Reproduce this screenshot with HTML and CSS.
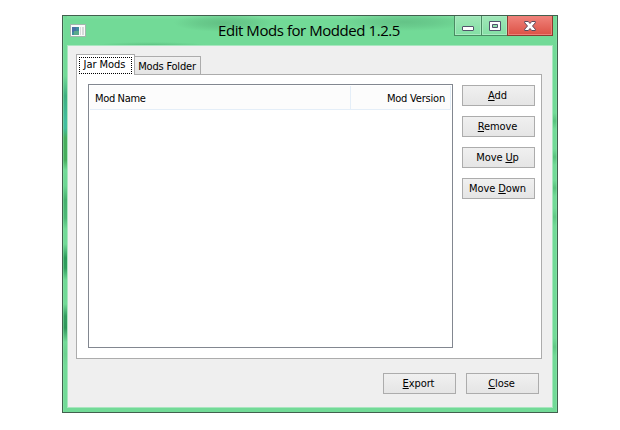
FILE: index.html
```html
<!DOCTYPE html>
<html lang="en">
<head>
<meta charset="utf-8">
<title>Edit Mods for Modded 1.2.5</title>
<link rel="stylesheet" href="styles.css">
</head>
<body>
<main class="window">
  <header class="titlebar">
    <svg class="app-icon" width="16" height="13" viewBox="0 0 16 13">
      <rect x=".5" y=".5" width="15" height="12" fill="#f8faf9" stroke="#a3b5ae"/>
      <rect x="2" y="3" width="7" height="8" fill="#3d8d9c"/>
      <rect x="2" y="3" width="4" height="5" fill="#4a6fa5"/>
      <rect x="4" y="7" width="5" height="4" fill="#5aa98c"/>
      <rect x="10" y="3" width="1" height="8" fill="#d5dad9"/>
      <rect x="12" y="3" width="2" height="8" fill="#d5dad9"/>
    </svg>
    <h1 class="title">Edit Mods for Modded 1.2.5</h1>
    <div class="controls">
      <button class="control minimize" aria-label="Minimize"><svg width="12" height="5" viewBox="0 0 12 5"><rect x=".5" y=".5" width="11" height="4" rx=".5" fill="#fff" stroke="#53536b"/></svg></button>
      <button class="control maximize" aria-label="Maximize"><svg width="12" height="10" viewBox="0 0 12 10"><path d="M.5.5h11v9H.5zM3.5 3.5v3h5v-3z" fill="#fff" fill-rule="evenodd" stroke="#53536b"/></svg></button>
      <button class="control close" aria-label="Close"><svg width="12" height="10" viewBox="0 0 12 10"><path d="M.7.5h3.600L6 2.500 7.700.5h3.600v1.300L8.500 5l2.800 3.200v1.300H7.700L6 7.500 4.300 9.500H.7V8.200L3.500 5 .7 1.800z" fill="#fff" stroke="#5b4a5c"/></svg></button>
    </div>
  </header>
  <section class="client">
    <nav class="tabs">
      <div class="tab active"><span class="focus">Jar Mods</span></div>
      <div class="tab">Mods Folder</div>
    </nav>
    <div class="pane">
      <div class="list">
        <div class="list-head"><span class="col name">Mod Name</span><span class="col version">Mod Version</span></div>
      </div>
      <div class="actions">
        <button class="btn"><u>A</u>dd</button>
        <button class="btn"><u>R</u>emove</button>
        <button class="btn">Move <u>U</u>p</button>
        <button class="btn">Move <u>D</u>own</button>
      </div>
    </div>
    <footer class="footer">
      <button class="btn"><u>E</u>xport</button>
      <button class="btn"><u>C</u>lose</button>
    </footer>
  </section>
</main>
</body>
</html>
```
FILE: styles.css
```css
* { box-sizing: border-box; }
body {
  margin: 0;
  padding: 15px 62px;
  background: #fff;
  color: #000;
  font: 11px/13px "DejaVu Sans Condensed", "DejaVu Sans", sans-serif;
  font-stretch: condensed;
  letter-spacing: -.3px;
}
button { font: inherit; font-stretch: inherit; letter-spacing: inherit; color: inherit; padding: 0; margin: 0; }
.window {
  width: 496px;
  height: 398px;
  border: 1px solid #42604e;
  padding: 0 4px 4px;
  background:
    linear-gradient(#8be5ab80, #8be5ab80) 0 0 / 1px 100% no-repeat,
    linear-gradient(#8be5ab80, #8be5ab80) 100% 0 / 1px 100% no-repeat,
    linear-gradient(#72da97 0 60px, #3fae80 80px, #42bda0 105px, #42bda0 112px, #47ad5c 122px, #47ad5c 144px, #72da97 154px, #6cd692 170px, #45b06d 184px, #4db876 202px, #72da97 213px, #72da97 228px, #2a9a59 242px, #2f9e5d 252px, #6fd995 264px, #72da97 288px, #349d60 300px, #2f965b 312px, #72da97 326px, #6cd18f 338px, #72da97 350px) 0 0 / 5px 100% no-repeat,
    linear-gradient(#72da97 0 97px, #58c27d 105px, #72da97 113px 133px, #58c27d 141px, #72da97 149px 164px, #58c27d 172px, #72da97 180px 192px, #5fc884 201px, #72da97 210px 322px, #5fc884 331px, #72da97 340px) 100% 0 / 5px 100% no-repeat,
    #72da97;
}
.titlebar {
  height: 29px;
  display: flex;
  align-items: flex-start;
  background:
    radial-gradient(ellipse 50px 9px at 157px 7px, #62c084, #62c08499 50%, #62c08400 100%),
    radial-gradient(ellipse 65px 9px at 338px 6px, #64c387, #64c38799 50%, #64c38700 100%),
    radial-gradient(ellipse 55px 3px at 84px 29px, #60c384, #60c38400 100%),
    linear-gradient(#80dfa1, #72da97 4px);
}
.app-icon { margin: 8px 0 0 3px; }
.title {
  flex: none;
  margin: 3px 0 0 132px;
  width: 183px;
  font: 400 15px/22px "Open Sans", "Noto Sans", sans-serif;
  letter-spacing: -.44px;
  white-space: nowrap;
}
.controls { display: flex; margin-left: auto; }
.control {
  height: 20px;
  display: flex;
  justify-content: center;
  align-items: center;
  border: 1px solid #4a8b63;
  border-top: 0;
  background: linear-gradient(#a0e7b8, #83dfa4);
  box-shadow: inset 0 0 0 1px #a8ebc0;
}
.minimize { width: 28px; }
.minimize svg { margin-top: 5px; }
.maximize { width: 27px; margin-left: -1px; }
.close {
  width: 46px;
  margin-left: -1px;
  border-color: #8c3a30;
  background: linear-gradient(#f0837b, #dc5145);
  box-shadow: inset 0 0 0 1px #ee8077;
}
.client {
  height: 363px;
  border: 1px solid #a9e6bf;
  background: #efefef;
  padding: 8px 10px 0 8px;
}
.tabs { display: flex; align-items: flex-end; height: 21px; position: relative; margin-bottom: -1px; }
.tab {
  height: 19px;
  width: 67px;
  margin-left: -1px;
  padding-right: 1px;
  border: 1px solid #acacac;
  background: linear-gradient(#f0f0f0, #e5e5e5);
  line-height: 19px;
  text-align: center;
  white-space: nowrap;
  letter-spacing: -.2px;
}
.tab.active { width: 59px; height: 21px; margin-left: 0; border-bottom: 0; background: #fff; padding: 2px; }
.focus { display: block; height: 17px; border: 1px dotted #000; line-height: 14px; padding-right: 2px; letter-spacing: -.05px; }
.pane {
  width: 466px;
  height: 285px;
  border: 1px solid #acacac;
  background: #fff;
  padding: 9px 6px 0 11px;
  display: flex;
  gap: 9px;
}
.list { width: 365px; height: 264px; border: 1px solid #828790; padding: 1px; }
.list-head { display: flex; width: 361px; height: 24px; background: #fcfcfc; border-bottom: 1px solid #e4eef8; line-height: 26px; }
.col { border-right: 1px solid #e4eef8; height: 23px; }
.name { width: 261px; padding-left: 5px; letter-spacing: -.35px; }
.version { width: 100px; padding-right: 5px; text-align: right; letter-spacing: -.2px; }
.actions { display: flex; flex-direction: column; gap: 10px; padding-top: 1px; }
.btn {
  width: 73px;
  height: 21px;
  padding: 1px 2px 0 0;
  border: 1px solid #acacac;
  background: linear-gradient(#f0f0f0, #e5e5e5);
  line-height: 18px;
  text-align: center;
  letter-spacing: -.1px;
}
.btn u { text-underline-offset: 1px; text-decoration-thickness: 1px; text-decoration-skip-ink: none; }
.footer { display: flex; justify-content: flex-end; gap: 10px; padding: 14px 3px 0 0; }
```
